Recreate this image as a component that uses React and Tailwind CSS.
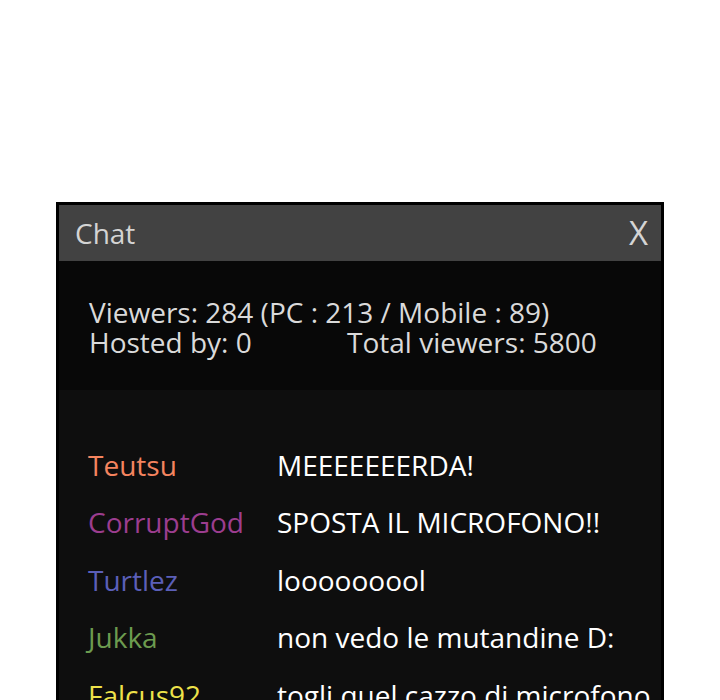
import React from 'react';

const messages = [
  { name: 'Teutsu', color: 'text-[#f4845f]', text: 'MEEEEEEERDA!' },
  { name: 'CorruptGod', color: 'text-[#9c3d8f]', text: 'SPOSTA IL MICROFONO!!' },
  { name: 'Turtlez', color: 'text-[#5b5fb8]', text: 'looooooool' },
  { name: 'Jukka', color: 'text-[#6c9b4f]', text: 'non vedo le mutandine D:' },
  { name: 'Falcus92', color: 'text-[#ede24a]', text: 'togli quel cazzo di microfono' },
];

export default function App() {
  return (
    <div className="h-[700px] overflow-hidden bg-white pt-[202px] pl-[56px] font-['Open_Sans',sans-serif]">
      <div className="w-[608px] border-[3px] border-black bg-[#0e0e0e]">
        <div className="flex h-[56px] items-center justify-between bg-[#424242] pl-[16px] pr-[13px]">
          <span className="text-[28px] text-[#d4d4d4]">Chat</span>
          <span className="text-[33px] text-[#d4d4d4]">X</span>
        </div>
        <div className="h-[129px] bg-[#080808] pl-[30px] pt-[36px] text-[28px] font-medium leading-[30px] text-[#dadada]">
          <div>Viewers: 284 (PC : 213 / Mobile : 89)</div>
          <div className="flex">
            <span className="w-[258px]">Hosted by: 0</span>
            <span>Total viewers: 5800</span>
          </div>
        </div>
        <div className="pl-[29px] pt-[46px] text-[28px] font-medium">
          {messages.map((m) => (
            <div key={m.name} className="flex h-[57.5px] items-center whitespace-nowrap">
              <span className={`w-[189px] ${m.color}`}>{m.name}</span>
              <span className="text-white">{m.text}</span>
            </div>
          ))}
        </div>
      </div>
    </div>
  );
}
